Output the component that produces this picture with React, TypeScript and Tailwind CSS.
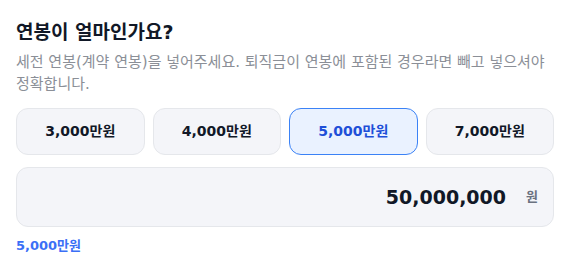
const presets = [
  { label: "3,000만원", value: 30000000 },
  { label: "4,000만원", value: 40000000 },
  { label: "5,000만원", value: 50000000 },
  { label: "7,000만원", value: 70000000 },
];

export default function App() {
  const selected = 50000000;

  return (
    <div
      className="bg-white px-4 pt-[18px] text-[#111827]"
      style={{ fontFamily: '"DejaVu Sans", "Noto Sans CJK KR", sans-serif' }}
    >
      <h2 className="text-[19px] font-bold leading-[28px]">연봉이 얼마인가요?</h2>
      <p className="mt-[5px] text-[15px] leading-[22px] text-[#8b8f97]">
        세전 연봉(계약 연봉)을 넣어주세요. 퇴직금이 연봉에 포함된 경우라면 빼고 넣으셔야 정확합니다.
      </p>

      <div className="mt-[13px] grid grid-cols-4 gap-2">
        {presets.map((p) => {
          const active = p.value === selected;
          return (
            <button
              key={p.label}
              className={
                active
                  ? "h-[47px] rounded-xl border border-[#3b82f6] bg-[#eaf2ff] text-[14px] font-bold text-[#1e4fd8]"
                  : "h-[47px] rounded-xl border border-[#e5e7eb] bg-[#f4f5f9] text-[14px] font-bold text-[#111827]"
              }
            >
              {p.label}
            </button>
          );
        })}
      </div>

      <div className="mt-3 flex h-[60px] items-center justify-end rounded-xl border border-[#e5e7eb] bg-[#f4f5f9] pr-[15px]">
        <span className="text-[19px] font-bold text-[#111827]">50,000,000</span>
        <span className="ml-5 text-[13px] font-bold text-[#6b7280]">원</span>
      </div>

      <div className="mt-[11px] text-[13px] font-bold leading-4 text-[#3b6ff6]">5,000만원</div>
    </div>
  );
}
